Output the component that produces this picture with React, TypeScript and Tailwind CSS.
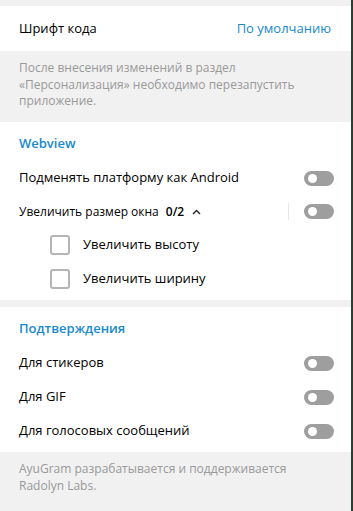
import React from "react";

const font = { fontFamily: '"Open Sans", "Noto Sans", sans-serif' };

function Toggle() {
  return (
    <div className="relative w-[30px] h-[15px] rounded-full bg-[#9e9e9e] shrink-0">
      <div className="absolute left-[4px] top-[3px] w-[9px] h-[9px] rounded-full bg-white" />
    </div>
  );
}

function ToggleRow({ label }: { label: string }) {
  return (
    <div className="h-[34px] flex items-center justify-between pl-[19px] pr-[17px]">
      <span className="text-[13px] text-black">{label}</span>
      <Toggle />
    </div>
  );
}

function CheckRow({ label }: { label: string }) {
  return (
    <div className="h-[34px] flex items-center pl-[50px]">
      <div className="w-[20px] h-[20px] rounded-[3px] border-2 border-[#b5b5b5] shrink-0" />
      <span className="ml-[13px] text-[13px] text-black">{label}</span>
    </div>
  );
}

export default function App() {
  return (
    <div className="w-[353px] h-[511px] flex bg-[#f1f1f1] overflow-hidden" style={font}>
      <div className="w-[351px] flex flex-col">
        <div className="h-[6px] bg-[#f1f1f1] shrink-0" />
        <div className="h-[45px] bg-white flex items-center justify-between pl-[19px] pr-[20px] shadow-[0_1px_1px_rgba(0,0,0,0.06)] shrink-0">
          <span className="text-[13px] text-black">Шрифт кода</span>
          <span className="text-[13px] text-[#168acd]">По умолчанию</span>
        </div>
        <div className="bg-[#f1f1f1] pt-[9px] pb-[12px] pl-[19px] pr-[19px] text-[12px] leading-[16.5px] text-[#999999] h-[71px] shrink-0">
          После внесения изменений в раздел «Персонализация» необходимо перезапустить приложение.
        </div>
        <div className="bg-white pt-[12px] pb-[4px] h-[178px] shrink-0 shadow-[0_1px_1px_rgba(0,0,0,0.06)]">
          <div className="pl-[19px] h-[18px] leading-[18px] text-[13px] font-semibold text-[#168acd]">Webview</div>
          <div className="mt-[9px]">
            <ToggleRow label="Подменять платформу как Android" />
            <div className="h-[33px] flex items-center pl-[19px] pr-[17px]">
              <span className="text-[12px] text-black">Увеличить размер окна</span>
              <span className="ml-[7px] text-[12px] font-semibold text-black">0/2</span>
              <svg className="ml-[8px]" width="9" height="6" viewBox="0 0 9 6">
                <path d="M1 5 L4.5 1.5 L8 5" fill="none" stroke="#222" strokeWidth="1.4" />
              </svg>
              <div className="flex-1" />
              <div className="w-px h-[17px] bg-[#e6e6e6] mr-[15px]" />
              <Toggle />
            </div>
            <CheckRow label="Увеличить высоту" />
            <CheckRow label="Увеличить ширину" />
          </div>
        </div>
        <div className="h-[7px] bg-[#f1f1f1] shrink-0" />
        <div className="bg-white pt-[12px] pb-[4px] h-[145px] shrink-0 shadow-[0_1px_1px_rgba(0,0,0,0.06)]">
          <div className="pl-[19px] h-[18px] leading-[18px] text-[13px] font-semibold text-[#168acd]">Подтверждения</div>
          <div className="mt-[9px]">
            <ToggleRow label="Для стикеров" />
            <ToggleRow label="Для GIF" />
            <ToggleRow label="Для голосовых сообщений" />
          </div>
        </div>
        <div className="bg-[#f1f1f1] pt-[8px] pl-[19px] pr-[19px] text-[12px] leading-[17px] text-[#999999] flex-1">
          AyuGram разрабатывается и поддерживается Radolyn Labs.
        </div>
      </div>
      <div className="w-[2px] bg-[#2e3d2e]" />
    </div>
  );
}
